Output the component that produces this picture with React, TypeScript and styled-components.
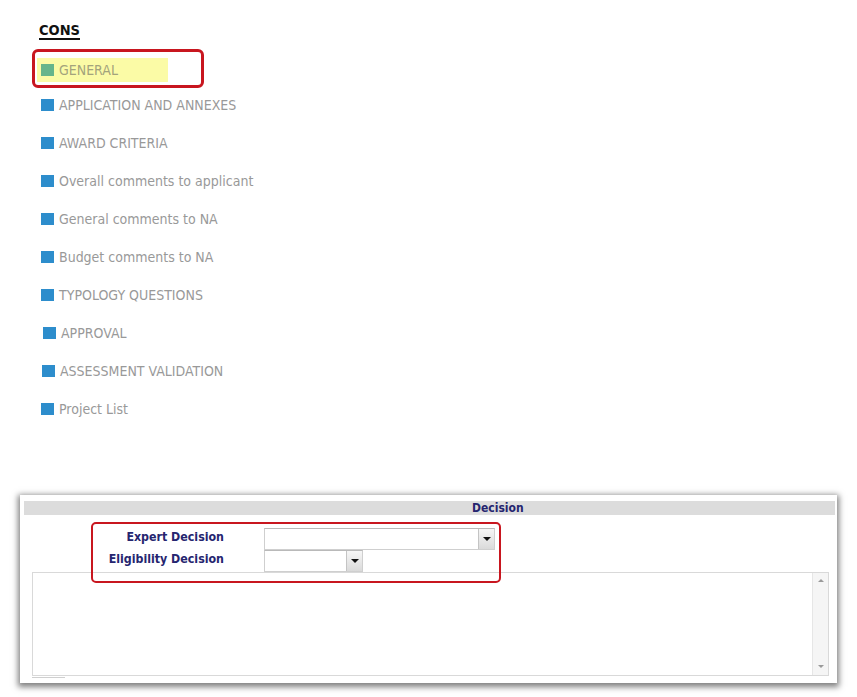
import React from 'react'
import styled, { createGlobalStyle } from 'styled-components'

const GlobalStyle = createGlobalStyle`
  html, body {
    margin: 0;
    padding: 0;
    background: #ffffff;
  }
  body {
    font-family: "DejaVu Sans Condensed", "DejaVu Sans", Verdana, sans-serif;
    font-stretch: semi-condensed;
  }
`

const menuItems = [
  'APPLICATION AND ANNEXES',
  'AWARD CRITERIA',
  'Overall comments to applicant',
  'General comments to NA',
  'Budget comments to NA',
  'TYPOLOGY QUESTIONS',
  'APPROVAL',
  'ASSESSMENT VALIDATION',
  'Project List',
]

const Page = styled.div`
  width: 857px;
  height: 697px;
  overflow: hidden;
  padding-top: 20px;
  box-sizing: border-box;
`

const Title = styled.h3`
  margin: 0 0 0 39px;
  font-size: 14.5px;
  line-height: 20px;
  font-weight: bold;
  color: #111111;
  text-decoration: underline;
  text-underline-offset: 3px;
  text-decoration-thickness: 1.5px;
`

const Menu = styled.ul`
  list-style: none;
  margin: 11px 0 0 37px;
  padding: 0;
`

const MenuRow = styled.li<{ $active?: boolean }>`
  position: relative;
  height: 38px;
  display: flex;
  align-items: center;
  margin-bottom: ${({ $active }) => ($active ? '-3px' : '0')};
`

const MenuLabel = styled.span<{ $active?: boolean; $shift?: number }>`
  display: flex;
  align-items: center;
  gap: 5px;
  height: 24px;
  box-sizing: border-box;
  padding-left: ${({ $shift }) => 4 + ($shift || 0)}px;
  width: ${({ $active }) => ($active ? '131px' : 'auto')};
  background: ${({ $active }) => ($active ? '#fbfba6' : 'transparent')};
  color: ${({ $active }) => ($active ? '#a3a37c' : '#999999')};
  font-size: 14px;
  white-space: nowrap;
`

const Square = styled.span<{ $active?: boolean }>`
  width: 13px;
  height: 12px;
  flex: none;
  background: ${({ $active }) => ($active ? '#66b58b' : '#2d8dcc')};
`

const Callout = styled.div`
  position: absolute;
  border: 3px solid #c8161f;
  border-radius: 6px;
  box-sizing: border-box;
  pointer-events: none;
`

const MenuCallout = styled(Callout)`
  left: -5px;
  top: -2px;
  width: 172px;
  height: 39px;
`

const Panel = styled.section`
  margin: 67px 0 0 20px;
  width: 817px;
  height: 188px;
  box-sizing: border-box;
  padding: 6px 2px 0 4px;
  background: #ffffff;
  box-shadow: 0 2px 6px 2px rgba(0, 0, 0, 0.5);
  display: flex;
  flex-direction: column;
`

const PanelHeader = styled.div`
  height: 14px;
  background: #dcdcdc;
  color: #25256f;
  font-size: 12px;
  font-weight: bold;
  line-height: 15px;
  padding-left: 448px;
`

const FormArea = styled.div`
  position: relative;
  padding-top: 13px;
`

const FieldRow = styled.div`
  display: flex;
  align-items: center;
  height: 22px;
`

const FieldLabel = styled.label`
  width: 200px;
  text-align: right;
  color: #25256f;
  font-size: 12.3px;
  font-weight: bold;
  margin-right: 40px;
  padding-bottom: 4px;
  white-space: nowrap;
`

const SelectBox = styled.div<{ $width: number }>`
  width: ${({ $width }) => $width}px;
  height: 22px;
  box-sizing: border-box;
  border: 1px solid #cfcfcf;
  border-top-color: #b9b9b9;
  background: #ffffff;
  display: flex;
  justify-content: flex-end;
`

const DropButton = styled.span`
  width: 16px;
  height: 100%;
  box-sizing: border-box;
  border-left: 1px solid #c4c4c4;
  background: linear-gradient(#f6f6f6, #dadada);
  display: flex;
  align-items: center;
  justify-content: center;
`

const DownArrow = styled.span`
  width: 0;
  height: 0;
  border-left: 4px solid transparent;
  border-right: 4px solid transparent;
  border-top: 4px solid #111111;
`

const FormCallout = styled(Callout)`
  border-width: 2px;
  border-radius: 5px;
  left: 67px;
  top: 7px;
  width: 410px;
  height: 61px;
`

const CommentBox = styled.div`
  margin: 0 6px 0 8px;
  height: 104px;
  box-sizing: border-box;
  border: 1px solid #d9d9d9;
  display: flex;
  justify-content: flex-end;
`

const ScrollTrack = styled.div`
  width: 15px;
  background: #f5f5f5;
  border-left: 1px solid #e6e6e6;
  display: flex;
  flex-direction: column;
  align-items: center;
  justify-content: space-between;
  padding: 6px 0 7px;
`

const ScrollArrow = styled.span<{ $up?: boolean }>`
  width: 0;
  height: 0;
  border-left: 3px solid transparent;
  border-right: 3px solid transparent;
  ${({ $up }) => ($up ? 'border-bottom: 3px solid #9a9a9a;' : 'border-top: 3px solid #9a9a9a;')}
`

const FooterTab = styled.div`
  margin: 1px 0 0 8px;
  width: 33px;
  height: 0;
  border-top: 1px solid #cfcfcf;
`

const App: React.FC = () => {
  return (
    <>
      <GlobalStyle />
      <Page>
        <Title>CONS</Title>
        <Menu>
          <MenuRow $active>
            <MenuLabel $active>
              <Square $active />
              GENERAL
            </MenuLabel>
            <MenuCallout />
          </MenuRow>
          {menuItems.map((item) => (
            <MenuRow key={item}>
              <MenuLabel $shift={item === 'APPROVAL' ? 2 : item === 'ASSESSMENT VALIDATION' ? 1 : 0}>
                <Square />
                {item}
              </MenuLabel>
            </MenuRow>
          ))}
        </Menu>

        <Panel>
          <PanelHeader>Decision</PanelHeader>
          <FormArea>
            <FieldRow>
              <FieldLabel>Expert Decision</FieldLabel>
              <SelectBox $width={231}>
                <DropButton>
                  <DownArrow />
                </DropButton>
              </SelectBox>
            </FieldRow>
            <FieldRow>
              <FieldLabel>Eligibility Decision</FieldLabel>
              <SelectBox $width={99}>
                <DropButton>
                  <DownArrow />
                </DropButton>
              </SelectBox>
            </FieldRow>
            <CommentBox>
              <ScrollTrack>
                <ScrollArrow $up />
                <ScrollArrow />
              </ScrollTrack>
            </CommentBox>
            <FormCallout />
          </FormArea>
          <FooterTab />
        </Panel>
      </Page>
    </>
  )
}

export default App
